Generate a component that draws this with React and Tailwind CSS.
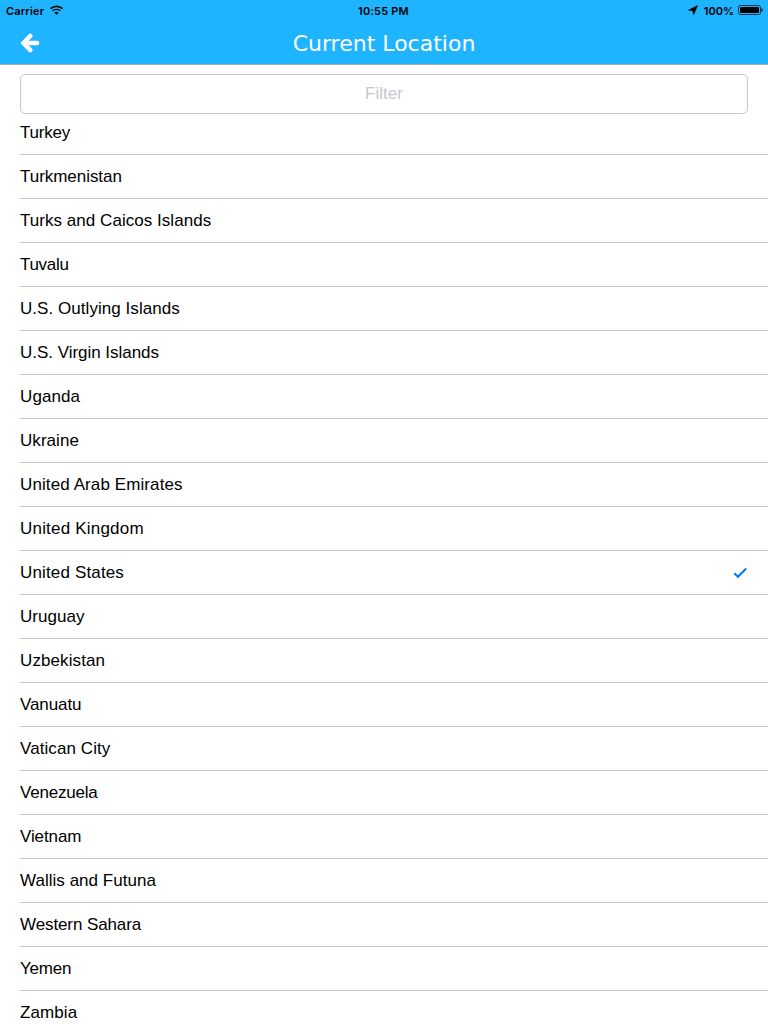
import React from "react";

const countries = [
  { name: "Turkey", tracking: "tracking-[-0.2px]" },
  { name: "Turkmenistan", tracking: "tracking-[-0.04px]" },
  { name: "Turks and Caicos Islands", tracking: "tracking-[0.04px]" },
  { name: "Tuvalu", tracking: "tracking-[-0.3px]" },
  { name: "U.S. Outlying Islands", tracking: "tracking-[0.05px]" },
  { name: "U.S. Virgin Islands", tracking: "tracking-[-0.03px]" },
  { name: "Uganda", tracking: "tracking-[0.1px]" },
  { name: "Ukraine", tracking: "tracking-[0.05px]" },
  { name: "United Arab Emirates", tracking: "tracking-[0.1px]" },
  { name: "United Kingdom", tracking: "tracking-[0.2px]" },
  { name: "United States", tracking: "tracking-[0.15px]", selected: true },
  { name: "Uruguay", tracking: "tracking-[0.05px]" },
  { name: "Uzbekistan", tracking: "tracking-[0.1px]" },
  { name: "Vanuatu", tracking: "tracking-[-0.1px]" },
  { name: "Vatican City", tracking: "tracking-[0.08px]" },
  { name: "Venezuela", tracking: "tracking-[-0.22px]" },
  { name: "Vietnam", tracking: "tracking-[-0.1px]" },
  { name: "Wallis and Futuna", tracking: "tracking-[0.03px]" },
  { name: "Western Sahara", tracking: "tracking-[-0.1px]" },
  { name: "Yemen", tracking: "tracking-[-0.2px]" },
  { name: "Zambia", tracking: "tracking-[0.08px]" },
];

function WifiIcon() {
  return (
    <svg width="13" height="10" viewBox="0 0 13 10" fill="none" stroke="#000">
      <path d="M0.5 3.7C4 .6 9 .6 12.5 3.7" strokeWidth="1.6" />
      <path d="M2.6 5.8C4.8 3.9 8.2 3.9 10.4 5.8" strokeWidth="1.5" />
      <path d="M6.5 9.7L4.3 7.5Q6.5 5.9 8.7 7.5Z" fill="#000" stroke="none" />
    </svg>
  );
}

function LocationIcon() {
  return (
    <svg width="10" height="10" viewBox="0 0 10 10">
      <path d="M9.6 0.5L5.6 9.6L4.6 5.5L0.4 5.2Z" fill="#000" stroke="#000" strokeWidth="0.6" />
    </svg>
  );
}

function BatteryIcon() {
  return (
    <svg width="25" height="10" viewBox="0 0 25 10">
      <rect x="0.5" y="0.5" width="22" height="9" rx="1.8" fill="none" stroke="#000" strokeWidth="0.7" />
      <rect x="2" y="2" width="19" height="6" rx="0.8" fill="#000" />
      <path d="M23.5 3.3Q24.8 3.8 24.8 5T23.5 6.7Z" fill="#000" />
    </svg>
  );
}

function BackIcon() {
  return (
    <svg width="20" height="20" viewBox="0 0 20 20" fill="none" stroke="#fff" strokeWidth="4.6" strokeLinecap="round">
      <path d="M10.2 3L3.6 10L10.2 17" />
      <path d="M4 10H17" />
    </svg>
  );
}

function StatusBar() {
  return (
    <div className="grid h-5 grid-cols-3 items-center pr-[5px] pl-1.5 text-[11px] font-semibold text-black">
      <div className="flex items-center gap-1.5">
        <span className="pt-0.5 tracking-[0.15px]">Carrier</span>
        <WifiIcon />
      </div>
      <span className="pt-0.5 pr-[2px] text-center tracking-[0.2px]">10:55 PM</span>
      <div className="flex items-center justify-end gap-1">
        <LocationIcon />
        <span className="ml-0.5 pt-0.5">100%</span>
        <BatteryIcon />
      </div>
    </div>
  );
}

export default function App() {
  return (
    <div className="flex h-[1024px] w-[768px] flex-col overflow-hidden bg-white font-['Inter','Liberation_Sans',sans-serif]">
      <header className="h-[65px] shrink-0 border-b border-[#aaacae] bg-[#1fb4ff]">
        <StatusBar />
        <div className="grid h-11 grid-cols-[60px_1fr_60px] items-center">
          <button aria-label="Back" className="ml-5 flex w-5 items-center pt-px">
            <BackIcon />
          </button>
          <h1 className="pt-[3px] text-center font-['DejaVu_Sans',sans-serif] text-[22px] leading-6 text-white">
            Current Location
          </h1>
        </div>
      </header>
      <div className="shrink-0 px-5 pt-[9px] font-['Liberation_Sans',sans-serif]">
        <input
          placeholder="Filter"
          className="block h-10 w-full rounded-[5px] border border-[#c8c8cb] bg-white text-center text-[17px] placeholder:text-[#c7c7cd]"
        />
      </div>
      <ul className="-mt-[3px] ml-5 font-['Liberation_Sans',sans-serif] text-[17px] text-black">
        {countries.map(({ name, tracking, selected }) => (
          <li key={name} className="flex h-11 items-center justify-between border-b border-[#c8c7cc] pr-[21px]">
            <span className={tracking}>{name}</span>
            {selected && (
              <svg width="14" height="12" viewBox="0 0 14 12" fill="none" stroke="#007aff" strokeWidth="2.1">
                <path d="M1.4 6.3L4.9 9.7L13.2 1.4" />
              </svg>
            )}
          </li>
        ))}
      </ul>
    </div>
  );
}
